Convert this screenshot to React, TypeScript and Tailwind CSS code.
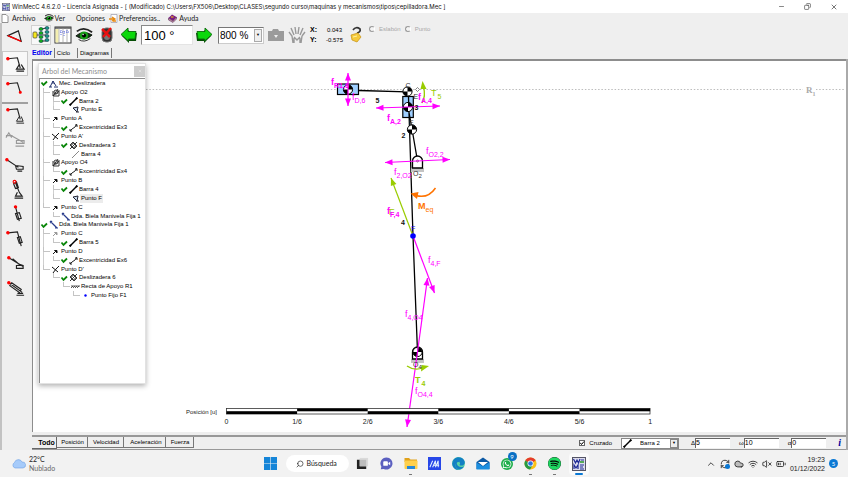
import { ReactNode } from "react";
import { Minus, Copy, X, Search, ChevronUp, Cloud, Wifi, VolumeX, RefreshCw, BatteryMedium } from "lucide-react";
import { FaEdge, FaSpotify, FaWhatsapp } from "react-icons/fa";

type Row = {
  guides?: string;
  check?: boolean;
  pad?: boolean;
  icon: string;
  text: string;
  selected?: boolean;
};

const rows: Row[] = [
  { check: true, icon: "mech", text: "Mec. Deslizadera" },
  { guides: "T", icon: "apoyo", text: "Apoyo O2" },
  { guides: "vT", check: true, icon: "barra", text: "Barra 2" },
  { guides: "vL", pad: true, icon: "punto", text: "Punto E" },
  { guides: "T", icon: "pin", text: "Punto A" },
  { guides: "vL", check: true, icon: "exc", text: "Excentricidad Ex3" },
  { guides: "T", icon: "cross", text: "Punto A'" },
  { guides: "vT", check: true, icon: "desl", text: "Deslizadera 3" },
  { guides: "vL", pad: true, icon: "thin", text: "Barra 4" },
  { guides: "T", icon: "apoyo", text: "Apoyo O4" },
  { guides: "vL", check: true, icon: "exc", text: "Excentricidad Ex4" },
  { guides: "T", icon: "pin", text: "Punto B" },
  { guides: "vT", check: true, icon: "barra", text: "Barra 4" },
  { guides: "vL", pad: true, icon: "punto", text: "Punto F", selected: true },
  { guides: "L", icon: "pin", text: "Punto C" },
  { guides: " L", icon: "dda", text: "Dda. Biela Manivela Fija 1" },
  { check: true, icon: "dda", text: "Dda. Biela Manivela Fija 1" },
  { guides: "T", icon: "pinGray", text: "Punto C" },
  { guides: "vL", check: true, icon: "barra", text: "Barra 5" },
  { guides: "T", icon: "pin", text: "Punto D" },
  { guides: "vL", check: true, icon: "exc", text: "Excentricidad Ex6" },
  { guides: "L", icon: "cross", text: "Punto D'" },
  { guides: " L", check: true, icon: "desl", text: "Deslizadera 6" },
  { guides: "  L", icon: "recta", text: "Recta de Apoyo R1" },
  { guides: "   L", icon: "dot", text: "Punto Fijo F1" },
];

const treeIcons: Record<string, ReactNode> = {
  mech: <path d="M1 8L4 2L7 7M4 2V5M5 8H9M0 8H3" stroke="#22306b" fill="none" />,
  apoyo: (
    <g stroke="#222" fill="none" strokeWidth="0.9">
      <circle cx="5" cy="4" r="2" />
      <path d="M2 8L7 1M2 3V8H8V2M2 8L8 3" />
    </g>
  ),
  barra: (
    <g stroke="#000" fill="#000">
      <path d="M1 8L8 1" strokeWidth="1.4" />
      <circle cx="1.3" cy="7.7" r="0.7" />
      <circle cx="7.7" cy="1.3" r="0.7" />
    </g>
  ),
  punto: <path d="M2 3L7 2L6 7ZM5 7H8" stroke="#223" fill="#cde" />,
  pin: <path d="M2 7L4 5M3.5 3.5H6V6Z" stroke="#111" fill="#111" />,
  pinGray: <path d="M2 7L4 5M3.5 3.5H6V6Z" stroke="#999" fill="#999" />,
  exc: <path d="M1 8L3 6L6 4L8 1M6 2H8V4M1 6V8H3" stroke="#222" fill="none" />,
  cross: <path d="M1 2L7 7M5 4L2 8M5 4L8 1" stroke="#111" fill="none" />,
  desl: (
    <g stroke="#222" fill="none" strokeWidth="0.9">
      <path d="M1 8L8 1M1 4L5 8L8 5L4 1Z" />
      <circle cx="4.5" cy="4.5" r="2" />
    </g>
  ),
  thin: <path d="M1 8L8 1" stroke="#888" fill="none" />,
  dda: <path d="M1 1L4 4L6 6L8 8M1 3L3 1M6 8H9" stroke="#2a3c8c" fill="none" strokeWidth="1.2" />,
  recta: <path d="M0 4H9M0 6L2 4M2 6L4 4M4 6L6 4M6 6L8 4" stroke="#333" fill="none" strokeWidth="0.8" />,
  dot: <circle cx="4.5" cy="4.5" r="1.2" fill="#0000ff" />,
};

const Guide = ({ kind, last }: { kind: string; last: boolean }) => (
  <span className={last ? "flex w-[7px] flex-col self-stretch" : "flex w-[10px] flex-col self-stretch"}>
    <span className={kind === " " ? "flex-1" : kind === "v" ? "flex-1 border-l border-[#cfcfcf]" : "flex-1 border-b border-l border-[#c4c4c4]"} />
    <span className={kind === "v" || kind === "T" ? "flex-1 border-l border-[#cfcfcf]" : "flex-1"} />
  </span>
);

const TreeRow = ({ row }: { row: Row }) => {
  const guides = (row.guides ?? "").split("");
  return (
    <li className={row.guides ? "flex items-center pl-[3px]" : "flex items-center"}>
      {guides.map((g, i) => (
        <Guide key={i} kind={g} last={i === guides.length - 1} />
      ))}
      {row.check && (
        <svg viewBox="0 0 8 8" className="size-2 shrink-0">
          <path d="M1.5 3.5L3.5 6L7 2.5" stroke="#0a860a" strokeWidth="1.8" fill="none" />
        </svg>
      )}
      <svg viewBox="0 0 9 9" className={row.pad ? "ml-[11px] size-[9px] shrink-0" : "ml-px size-[9px] shrink-0"}>
        {treeIcons[row.icon]}
      </svg>
      <span className={row.selected ? "bg-[#ececec] px-px" : "px-px"}>{row.text}</span>
    </li>
  );
};

const TreePanel = () => (
  <section className="absolute top-[2px] bottom-[48px] left-[5px] flex w-[108px] flex-col border border-[#e2e2e2] bg-white shadow-[0_2px_5px_rgba(0,0,0,0.3)]">
    <header className="flex h-[14px] items-center justify-between bg-white pl-[3px] text-[#8c8c8c]">
      <h2 className="font-['Lato',sans-serif] text-[7px]">Arbol del Mecanismo</h2>
      <button aria-label="Cerrar" className="flex h-[11px] w-[11px] items-center justify-center bg-[#cdcdcd] text-white">
        <X size={4} />
      </button>
    </header>
    <div className="flex-1 border-t border-l border-[#8c8c8c]">
      <ul className="grid h-[221px] auto-rows-fr whitespace-nowrap">
        {rows.map((row, i) => (
          <TreeRow key={i} row={row} />
        ))}
      </ul>
    </div>
  </section>
);

const Mass = ({ x, y }: { x: number; y: number }) => (
  <g transform={`translate(${x} ${y})`}>
    <circle r="4.6" fill="#fff" stroke="#000" />
    <path d="M0 0V-4.6A4.6 4.6 0 0 1 4.6 0ZM0 0V4.6A4.6 4.6 0 0 1 -4.6 0Z" fill="#000" />
  </g>
);

const Arrow = ({ from, to, color }: { from: number[]; to: number[]; color: string }) => {
  const angle = (Math.atan2(to[1] - from[1], to[0] - from[0]) * 180) / Math.PI;
  return (
    <g fill={color} stroke={color}>
      <path d={`M${from[0]} ${from[1]}L${to[0]} ${to[1]}`} strokeWidth="1.2" />
      <path d="M0 0L-7.5 -3L-7.5 3Z" stroke="none" transform={`translate(${to[0]} ${to[1]}) rotate(${angle})`} />
    </g>
  );
};

const Force = ({ x, y, sub, bold }: { x: number; y: number; sub: string; bold?: boolean }) => (
  <text x={x} y={y} fontSize="9" fontWeight={bold ? 700 : 400} fill="#ff00ff">
    f
    <tspan dy="3" fontSize="7">{sub}</tspan>
  </text>
);

const Ground = ({ y }: { y: number }) => (
  <g>
    <rect x="411" y={y + 12} width="13" height="4" fill="#c4c4c4" />
    <path d={`M412.5 ${y + 12}V${y + 5}A5 5 0 0 1 422.5 ${y + 5}V${y + 12}Z`} fill="#fff" stroke="#000" strokeWidth="1.3" />
  </g>
);

const Mechanism = () => (
  <svg viewBox="33 61 812 371" preserveAspectRatio="xMinYMin meet" className="size-full font-['Liberation_Sans',sans-serif]">
    <path d="M146 89.5H845" stroke="#bdbdbd" strokeDasharray="1.5 1.8" />
    <rect x="803" y="84" width="13" height="11" fill="#fff" />
    <text x="806" y="93" fontSize="9" fontWeight="700" fill="#aaa" className="font-['Liberation_Serif',serif]">
      R<tspan dy="3" fontSize="6">1</tspan>
    </text>

    <rect x="337.5" y="84" width="21" height="10.5" fill="#9fcfff" stroke="#000" strokeWidth="1.2" />
    <rect x="402.8" y="96.5" width="10.5" height="21" fill="#9fcfff" stroke="#000" strokeWidth="1.2" />
    <path d="M359 90.5L407 91.8M408 107L412 129L417.5 161M408.5 97L413 236L417.5 352" stroke="#000" strokeWidth="1.3" fill="none" />

    <Ground y={156} />
    <Ground y={347} />
    <circle cx="417.5" cy="161" r="1" fill="#fff" stroke="#000" strokeWidth="0.5" />
    <Mass x={348} y={89.5} />
    <Mass x={407.5} y={91.5} />
    <Mass x={408} y={107} />
    <Mass x={412} y={129.5} />
    <Mass x={417.5} y={352} />
    <path d="M417.5 87.5L419.5 89.5L417.5 91.5L415.5 89.5Z" fill="#fff" stroke="#555" strokeWidth="0.7" />

    <Arrow from={[348, 89]} to={[348, 73]} color="#ff00ff" />
    <Arrow from={[348, 89]} to={[348, 106]} color="#ff00ff" />
    <Arrow from={[408, 107]} to={[376, 108]} color="#ff00ff" />
    <Arrow from={[408, 107]} to={[440, 106]} color="#ff00ff" />
    <Arrow from={[417, 161]} to={[385, 162.5]} color="#ff00ff" />
    <Arrow from={[417, 161]} to={[450, 159.5]} color="#ff00ff" />
    <Arrow from={[413, 236]} to={[391, 178]} color="#99cc00" />
    <Arrow from={[413, 236]} to={[434.5, 293]} color="#ff00ff" />
    <Arrow from={[417.5, 352]} to={[427.5, 278]} color="#ff00ff" />
    <Arrow from={[417.5, 352]} to={[407, 427]} color="#ff00ff" />
    <circle cx="413" cy="236" r="2.8" fill="#0000ff" />

    <path d="M422 103Q426 96 423.5 87" stroke="#99cc00" strokeWidth="1.3" fill="none" />
    <path d="M422.5 81L426.5 89L420.5 89Z" fill="#99cc00" />
    <path d="M407 366Q414 371 423 368" stroke="#99cc00" strokeWidth="1.3" fill="none" />
    <path d="M429 366L421 371.5L421.5 365Z" fill="#99cc00" />
    <path d="M435.5 188Q428 199 416 195.5" stroke="#ff7300" strokeWidth="1.5" fill="none" />
    <path d="M410.5 193.5L418.5 192L417 199Z" fill="#ff7300" />

    <text x="431" y="96" fontSize="9" fill="#99cc00">T<tspan dx="1" dy="3" fontSize="7">5</tspan></text>
    <text x="415" y="383" fontSize="9" fontWeight="700" fill="#99cc00">T<tspan dx="1" dy="3" fontSize="7">4</tspan></text>
    <text x="418" y="209" fontSize="9" fontWeight="700" fill="#ff7300">M<tspan dy="3" fontSize="7" fontWeight="400">eq</tspan></text>

    <Force x={331} y={85} sub="R1,6" bold />
    <Force x={352} y={100} sub="D,6" />
    <Force x={418} y={100} sub="A,4" bold />
    <Force x={387} y={121} sub="A,2" bold />
    <Force x={426} y={154} sub="O2,2" />
    <Force x={394} y={175} sub="2,O2" />
    <text x="389" y="215" fontSize="9" fill="#99cc00">F</text>
    <Force x={387} y={214} sub="F,4" bold />
    <Force x={428} y={263} sub="4,F" />
    <Force x={405} y={317} sub="4,O4" />
    <Force x={415} y={394} sub="O4,4" />

    <g fontSize="7" fontWeight="700" fill="#111">
      <text x="375.5" y="103">5</text>
      <text x="414.5" y="110">3</text>
      <text x="401.5" y="138">2</text>
      <text x="401" y="225">4</text>
    </g>
    <g fontSize="7" fill="#333">
      <text x="405.5" y="88">C</text>
      <text x="413.5" y="99">E</text>
      <text x="409" y="125">E</text>
      <text x="413" y="176">O<tspan dy="2" fontSize="6">2</tspan></text>
      <text x="413" y="367">O<tspan dy="2" fontSize="6">4</tspan></text>
      <text x="411" y="231" fill="#0000ff">F</text>
    </g>

    <rect x="226.5" y="408.5" width="423.5" height="5.5" fill="#fff" stroke="#333" strokeWidth="0.8" />
    {[0, 1, 2, 3, 4, 5].map((i) => (
      <rect key={i} x={226.5 + i * 70.6} y={i % 2 ? 408.5 : 411.2} width="70.6" height="2.8" fill="#000" />
    ))}
    <g fill="#222">
      <text x="186" y="414" fontSize="6">Posición [u]</text>
      {["0", "1/6", "2/6", "3/6", "4/6", "5/6", "1"].map((label, i) => (
        <text key={label} x={226.5 + i * 70.6} y="424" fontSize="7" textAnchor="middle">{label}</text>
      ))}
    </g>
  </svg>
);

const Eye = ({ className }: { className: string }) => (
  <svg viewBox="0 0 20 18" className={className}>
    <path d="M2 5Q10 -1 19 6" stroke="#222" strokeWidth="2" fill="none" />
    <path d="M1 10Q9 3 19 9Q11 17 1 10Z" fill="#123c12" stroke="#111" />
    <circle cx="10" cy="9.5" r="4.5" fill="#18a018" />
    <circle cx="10" cy="9.5" r="2.3" fill="#000" />
    <circle cx="9" cy="8.5" r="0.8" fill="#fff" />
    <path d="M4 14Q10 18 17 13" stroke="#222" strokeWidth="1" fill="none" />
  </svg>
);

const GreenArrow = ({ flip }: { flip?: boolean }) => (
  <svg viewBox="0 0 18 16" className={flip ? "h-[16px] w-[18px] -scale-x-100" : "h-[16px] w-[18px]"}>
    <path d="M2 9L9 3V6H17L16 14H9V16Z" fill="#064d06" />
    <path d="M1 7.5L8 1V4.5H16L15 12H8.5V14Z" fill="#0bd80b" stroke="#0a6a0a" strokeWidth="0.9" />
  </svg>
);

const sideTools = [
  { name: "Triángulo", art: <><path d="M3 8L14 3L17 14Z" /><path d="M3 8L17 14" stroke="#f00" strokeWidth="1.5" /></> },
  { name: "Manivela", art: <><path d="M3 6L13 5L16 16" /><path d="M15 12L12 17H20L17 12M12 19H20" strokeWidth="1.3" /><circle cx="3" cy="6" r="1.2" fill="#f00" stroke="#f00" /></> },
  { name: "Díada", art: <><path d="M3 6L13 5L16 15" /><circle cx="3" cy="6" r="1.2" fill="#f00" stroke="#f00" /><circle cx="16" cy="15" r="1" fill="#f00" stroke="#f00" /></> },
  { name: "Biela", art: <><path d="M3 5L13 4L16 15" /><path d="M15 12L12 17H19L17 12M12 19H20" strokeWidth="1" /><circle cx="3" cy="5" r="1.2" fill="#f00" stroke="#f00" /></> },
  { name: "Corredera", art: <g stroke="#999"><path d="M1 7H8M1 9L4 4L7 9M5 6L19 14M12 12H20V15H12ZM11 18H20" /></g> },
  { name: "Biela corredera", art: <><path d="M2 6L14 14M11 12L19 13V16H12ZM13 18H18" /><circle cx="2" cy="6" r="1.2" fill="#f00" stroke="#f00" /></> },
  { name: "Pistón", art: <><path d="M11 4L15 14M9 5L11 10L14 9L12 3ZM13 14L11 18H18L15 14M10 20H19" /><circle cx="10" cy="3" r="1.5" stroke="#f00" /></> },
  { name: "Deslizadera", art: <><path d="M11 3L15 18M11 10L15 9L17 15L13 16Z" /><circle cx="11" cy="3" r="1.2" fill="#f00" stroke="#f00" /></> },
  { name: "Díada deslizadera", art: <><path d="M3 4L13 3L17 18M13 9L16 8L18 14L15 15Z" /><circle cx="3" cy="4" r="1.2" fill="#f00" stroke="#f00" /></> },
  { name: "Guía", art: <><path d="M4 4L19 13M8 5L15 11M13 10L19 12M12 12H19V15H12Z" /><circle cx="4" cy="4" r="1.2" fill="#f00" stroke="#f00" /></> },
  { name: "Cilindro", art: <><path d="M4 4L18 14M7 4L17 11L15 14L5 7ZM13 15H19M12 17H20" /><circle cx="4" cy="4" r="1.2" fill="#f00" stroke="#f00" /></> },
];

const SideBar = () => (
  <aside className="flex w-[28px] shrink-0 flex-col border-l-2 border-[#c2c2c2] bg-[#efefef] pt-[3px]">
    {sideTools.map((tool, i) => (
      <button
        key={tool.name}
        aria-label={tool.name}
        className={
          i === 1
            ? "flex h-[25px] items-center justify-center border border-[#c8c8c8] bg-[#f8f8f8]"
            : i === 3
              ? "mt-px flex h-[25px] items-center justify-center border-t-2 border-[#a0a0a0]"
              : "flex h-[25px] items-center justify-center"
        }
      >
        <svg viewBox="0 0 22 22" className="size-[21px]" fill="none" stroke="#222" strokeWidth="1.2">
          {tool.art}
        </svg>
      </button>
    ))}
  </aside>
);

const ToolBar = () => (
  <div className="flex h-[22px] items-center pl-[2px]">
    <button aria-label="Árbol" className="flex h-[20px] w-[20px] items-center justify-center border border-[#d0d0d0] bg-[#f8f8f8]">
      <svg viewBox="0 0 18 18" className="size-[18px]">
        <rect x="1" y="6" width="4" height="6" rx="1" fill="#f5e61e" stroke="#444" strokeWidth="0.7" />
        <path d="M5 9H8M10 3L14 2M10 9H14M10 15L14 15" stroke="#333" />
        {[2, 6, 10, 14].map((y) => (
          <g key={y} stroke="#034" strokeWidth="0.6">
            <ellipse cx="9" cy={y + 1} rx="2" ry="1.5" fill="#14b514" />
            <ellipse cx="15" cy={y} rx="2" ry="1.5" fill="#1b9a88" />
          </g>
        ))}
      </svg>
    </button>
    <button aria-label="Tabla" className="ml-[3px]">
      <svg viewBox="0 0 18 18" className="size-[18px]">
        <rect x="1" y="1" width="16" height="16" fill="#fff" stroke="#333" />
        <path d="M1 2H17" stroke="#555" strokeWidth="1.5" />
        <rect x="1.5" y="3" width="3" height="13.5" fill="#f4efb0" />
        <path d="M5 2V17M9 2V17M13 2V17" stroke="#999" strokeWidth="0.7" />
        <path d="M7 4V9M10 5V10M13 4V8M6 6H15" stroke="#6672e0" strokeDasharray="1 1" />
      </svg>
    </button>
    <button aria-label="Ver" className="ml-[3px]"><Eye className="size-[18px]" /></button>
    <button aria-label="Detener" className="ml-[6px]">
      <svg viewBox="0 0 16 18" className="h-[18px] w-[16px]">
        <rect x="3" y="2" width="10" height="14" rx="4" fill="#333" stroke="#777" />
        <circle cx="8" cy="11" r="3" fill="#777" />
        <path d="M3 3L11 11M12 2L4 11" stroke="#e81010" strokeWidth="2.5" />
      </svg>
    </button>
    <button aria-label="Retroceder" className="ml-[5px]"><GreenArrow /></button>
    <input aria-label="Ángulo" defaultValue="100 °" className="ml-[3px] h-[20px] w-[52px] border border-[#e4e4e4] border-t-[#888] border-l-[#888] bg-white pl-[2px] font-['Liberation_Sans',sans-serif] text-[13px]" />
    <button aria-label="Avanzar" className="ml-[2px]"><GreenArrow flip /></button>
    <span className="relative ml-[5px] block">
      <select aria-label="Zoom" className="block h-[17px] w-[46px] appearance-none border border-[#ccc] border-t-[#777] border-l-[#777] bg-white pl-px font-['Liberation_Sans',sans-serif] text-[10px]">
        <option>800 %</option>
      </select>
      <span className="pointer-events-none absolute top-[2px] right-[2px] flex h-[13px] w-[8px] items-center justify-center border border-[#aaa] bg-[#efefef] text-[4px]">▼</span>
    </span>
    <button aria-label="Captura" className="ml-[3px]">
      <svg viewBox="0 0 18 16" className="h-[16px] w-[18px]">
        <path d="M1 4H5L6 2H11L12 4H17V14H1Z" fill="#9b9b9b" />
        <path d="M7 8H11L9 11Z" fill="#eee" />
      </svg>
    </button>
    <button aria-label="Mano" className="ml-[3px]">
      <svg viewBox="0 0 18 18" className="size-[18px]" stroke="#999" fill="none" strokeWidth="1.4">
        <path d="M5 17L4 10L1 6M6 9L3 2M8 8L7 1M10 8L11 1M12 9L15 2M14 10L17 6M13 17L14 10M6 11L9 14L12 11M6 17V12M12 17V12" />
      </svg>
    </button>
    <dl className="ml-[4px] grid w-[32px] grid-cols-2 font-['Liberation_Sans',sans-serif] text-[6px] leading-[10px]">
      <dt className="text-[7px] font-bold">X:</dt>
      <dd className="text-right">0.043</dd>
      <dt className="text-[7px] font-bold">Y:</dt>
      <dd className="text-right">-0.575</dd>
    </dl>
    <button aria-label="Ayuda contextual" className="ml-[7px]">
      <svg viewBox="0 0 14 18" className="h-[18px] w-[14px]">
        <path d="M4 4Q7 0 11 3Q12 6 8 7" stroke="#333" strokeWidth="1.7" fill="none" />
        <path d="M2 9L9 7L12 11L8 16L3 14Z" fill="#f5c93b" stroke="#c58f10" strokeWidth="0.7" />
        <path d="M4 11L8 10" stroke="#fff3a0" />
      </svg>
    </button>
    <fieldset disabled className="ml-[6px] flex gap-1 self-start pt-px font-['Liberation_Sans',sans-serif] text-[6px] leading-[8px] text-[#a8a8a8]">
      <label className="flex items-center gap-1">
        <input type="radio" name="target" className="size-[6px] appearance-none rounded-full border border-[#999] border-r-white bg-[#f4f4f4]" />
        Eslabón
      </label>
      <label className="flex items-center gap-1">
        <input type="radio" name="target" className="size-[6px] appearance-none rounded-full border border-[#999] border-r-white bg-[#f4f4f4]" />
        Punto
      </label>
    </fieldset>
  </div>
);

const StatusBar = () => (
  <div className="flex h-[15px] items-start border-t-2 border-b border-[#999] font-['Liberation_Sans',sans-serif] text-[6px]">
    <nav className="flex h-[12px] items-stretch">
      <button className="w-[25px] border-r border-b border-[#666] pl-[5px] text-[7px] leading-[11px] font-bold">Todo</button>
      <button className="mb-px w-[31px] border-r border-b border-[#777] pl-px leading-[10px]">Posición</button>
      <button className="mb-px w-[36px] border-r border-b border-[#777] pl-px leading-[10px]">Velocidad</button>
      <button className="mb-px w-[42px] border-r border-b border-[#777] pl-[3px] leading-[10px]">Aceleración</button>
      <button className="mb-px w-[28px] border-r border-b border-[#777] pl-px leading-[10px]">Fuerza</button>
    </nav>
    <div className="ml-auto flex h-[12px] items-center pr-[5px]">
      <label className="flex items-center gap-1">
        <span className="relative flex">
          <input type="checkbox" defaultChecked className="peer size-[6px] appearance-none border border-[#666] bg-white" />
          <svg viewBox="0 0 6 6" className="pointer-events-none absolute inset-0 hidden size-[6px] peer-checked:block">
            <path d="M1.3 2.8L2.5 4.5L5 1.5" stroke="#000" fill="none" />
          </svg>
        </span>
        Cruzado
      </label>
      <span className="relative ml-[9px] block">
        <select aria-label="Barra" className="block h-[11px] w-[58px] appearance-none border border-[#888] bg-white pl-[18px] text-[6px]">
          <option>Barra 2</option>
        </select>
        <svg viewBox="0 0 9 9" className="pointer-events-none absolute top-px left-[2px] size-[9px]">{treeIcons.barra}</svg>
        <span className="pointer-events-none absolute top-px right-px flex h-[9px] w-[8px] items-center justify-center border border-[#888] bg-[#efefef] text-[4px]">▼</span>
      </span>
      <label className="ml-[12px] flex items-center">
        Δ
        <input defaultValue="5" className="h-[10px] w-[35px] border-t border-l border-[#666] bg-white text-[7px]" />
      </label>
      <label className="ml-[9px] flex items-center">
        ω
        <input defaultValue="10" className="h-[10px] w-[35px] border-t border-l border-[#666] bg-white text-[7px]" />
      </label>
      <label className="ml-[9px] flex items-center">
        α
        <input defaultValue="0" className="h-[10px] w-[35px] border-t border-l border-[#666] bg-white text-[7px]" />
      </label>
      <button aria-label="Información" className="ml-[12px] font-['Liberation_Serif',serif] text-[10px] leading-[10px] font-bold text-[#00009c] italic">i</button>
    </div>
  </div>
);

const AppLogo = ({ className }: { className: string }) => (
  <svg viewBox="0 0 14 14" className={className}>
    <rect x="0.5" y="0.5" width="13" height="13" fill="#dcdcec" stroke="#556" />
    <path d="M1.5 2L3.5 6L5 3L6.5 6L8 2M9 3H12M2 12V8L4 11L6 8V12M8 8H12M8 10H11M8 12H12" stroke="#1e2a96" strokeWidth="1.2" fill="none" />
    <path d="M8 5H12" stroke="#1a951a" strokeWidth="1.4" />
  </svg>
);

const TaskItem = ({ name, running, active, children }: { name: string; running?: boolean; active?: boolean; children: ReactNode }) => (
  <button
    aria-label={name}
    className={
      active
        ? "relative flex h-[22px] w-[20px] items-center justify-center rounded-sm bg-[#fafafa]"
        : "relative flex h-[22px] w-[20px] items-center justify-center"
    }
  >
    {children}
    {running && <span className="absolute bottom-0 h-px w-[3px] bg-[#777]" />}
    {active && <span className="absolute bottom-0 h-[2px] w-[8px] rounded-full bg-[#0a78d4]" />}
  </button>
);

const TaskBar = () => (
  <footer className="flex h-[27px] shrink-0 items-center bg-[#f2f2f2] text-[7px] text-[#222]">
    <div className="flex flex-1 items-center gap-[3px] pl-[11px]">
      <svg viewBox="0 0 15 11" className="h-[11px] w-[15px]">
        <path d="M4 10A3 3 0 0 1 3.5 4.5A4 4 0 0 1 11 4A3 3 0 0 1 12 10Z" fill="#a6cbfa" stroke="#6b9fe6" strokeWidth="0.6" />
      </svg>
      <div className="leading-[9px]">
        <p>22°C</p>
        <p className="text-[#666]">Nublado</p>
      </div>
    </div>
    <nav className="flex items-center gap-[4px] pl-[3px]">
      <button aria-label="Inicio" className="mr-[5px]">
        <svg viewBox="0 0 13 13" className="size-[13px]" fill="#1585d8">
          <path d="M0 0H6.2V6.2H0ZM6.8 0H13V6.2H6.8ZM0 6.8H6.2V13H0ZM6.8 6.8H13V13H6.8Z" />
        </svg>
      </button>
      <button className="flex h-[17px] w-[63px] items-center gap-[3px] rounded-full bg-white pl-[10px]">
        <Search size={8} className="-scale-x-100" />
        Búsqueda
      </button>
      <TaskItem name="Vista de tareas">
        <svg viewBox="0 0 14 14" className="size-[13px]">
          <rect x="4" y="1" width="9" height="9" fill="#dadada" />
          <path d="M1 3H4V10H11V13H1Z" fill="#222" />
          <rect x="4" y="3" width="7" height="7" fill="#bdbdbd" />
        </svg>
      </TaskItem>
      <TaskItem name="Chat">
        <svg viewBox="0 0 14 14" className="size-[13px]">
          <path d="M7 0.5A6.5 6.5 0 1 1 4 12.8L0.8 13.3L1.5 10.5A6.5 6.5 0 0 1 7 0.5Z" fill="#5b5fc0" />
          <rect x="3.5" y="4.5" width="5" height="5" rx="1" fill="#fff" />
          <path d="M9 6.5L11 5V9L9 7.5Z" fill="#fff" />
        </svg>
      </TaskItem>
      <TaskItem name="Explorador" running>
        <svg viewBox="0 0 14 13" className="h-[13px] w-[14px]">
          <path d="M0.5 1H5L6.5 2.5H13V5H0.5Z" fill="#e0a11b" />
          <rect x="0.5" y="3.5" width="13" height="8.5" rx="0.8" fill="#ffd04c" />
          <path d="M3 12V9H11V12Z" fill="#2687d8" />
        </svg>
      </TaskItem>
      <TaskItem name="MyAsus">
        <svg viewBox="0 0 14 14" className="size-[13px]">
          <rect width="14" height="14" fill="#2747e8" />
          <path d="M2 11L5 4M5 11L8 4L8 8M8 11L11 4V11M6 9H12" stroke="#e8f6ff" fill="none" strokeWidth="1.1" />
        </svg>
      </TaskItem>
      <TaskItem name="Edge">
        <span className="flex rounded-full bg-[#5fd3a4]"><FaEdge size={13} color="#1280c4" /></span>
      </TaskItem>
      <TaskItem name="Correo">
        <svg viewBox="0 0 14 13" className="h-[13px] w-[14px]">
          <path d="M0.5 5L7 0.5L13.5 5V12H0.5Z" fill="#0c59a4" />
          <path d="M2 5H12L7 9Z" fill="#fff" />
          <path d="M0.5 5.5L7 9.5L13.5 5.5V12.5H0.5Z" fill="#1c8fe0" />
        </svg>
      </TaskItem>
      <TaskItem name="WhatsApp">
        <span className="flex size-[12px] items-center justify-center rounded-full bg-[#1fae4b]"><FaWhatsapp size={10} color="#fff" /></span>
        <span className="absolute -top-px right-0 flex size-[9px] items-center justify-center rounded-full bg-[#0a70c4] text-[6px] text-white">9</span>
      </TaskItem>
      <TaskItem name="Chrome" running>
        <svg viewBox="0 0 14 14" className="size-[13px]">
          <circle cx="7" cy="7" r="6.5" fill="#fbc116" />
          <path d="M7 7L1.4 3.7A6.5 6.5 0 0 1 12.6 3.7Z" fill="#e33b2e" />
          <path d="M7 7L1.4 3.7A6.5 6.5 0 0 0 6.5 13.5L9.8 8Z" fill="#269a45" />
          <circle cx="7" cy="7" r="3.2" fill="#fff" />
          <circle cx="7" cy="7" r="2.5" fill="#2d74e0" />
        </svg>
      </TaskItem>
      <TaskItem name="Spotify" running>
        <span className="flex rounded-full bg-black"><FaSpotify size={13} color="#1ed760" /></span>
      </TaskItem>
      <TaskItem name="WinMecC" active><AppLogo className="size-[14px]" /></TaskItem>
    </nav>
    <div className="flex flex-1 items-center justify-end gap-[4px] pr-[10px]">
      <ChevronUp size={10} />
      <span className="relative flex">
        <RefreshCw size={10} />
        <span className="absolute right-0 bottom-0 size-[5px] rounded-full bg-[#0a78d4]" />
      </span>
      <Cloud size={10} fill="#bbb" />
      <Wifi size={10} />
      <VolumeX size={10} />
      <BatteryMedium size={10} />
      <div className="text-right font-['Liberation_Sans',sans-serif] leading-[9px]">
        <p>19:23</p>
        <p>01/12/2022</p>
      </div>
      <span className="flex size-[9px] items-center justify-center rounded-full bg-[#0a78d4] text-[6px] text-white">5</span>
    </div>
  </footer>
);

const TitleBar = () => (
  <header className="flex h-[13px] shrink-0 items-center bg-white pl-[2px]">
    <AppLogo className="size-[8px]" />
    <h1 className="ml-[2px] font-['Inter',sans-serif] text-[6px] whitespace-nowrap text-[#111]">
      WinMecC 4.6.2.0 - Licencia Asignada - [ (Modificado) C:\Users\FX506\Desktop\CLASES\segundo curso\maquinas y mecanismos\tipos\cepilladora.Mec ]
    </h1>
    <div className="ml-auto flex gap-[19px] pr-[10px] text-[#333]">
      <button aria-label="Minimizar"><Minus size={7} /></button>
      <button aria-label="Restaurar"><Copy size={7} className="-scale-x-100" /></button>
      <button aria-label="Cerrar"><X size={8} /></button>
    </div>
  </header>
);

const MenuBar = () => (
  <nav className="flex h-[10px] shrink-0 items-center pl-px text-[7px] text-[#222]">
    <button className="flex items-center gap-[3px]">
      <svg viewBox="0 0 8 9" className="h-[9px] w-[8px]"><path d="M1 0.5H5L7 2.5V8.5H1Z" fill="#fff" stroke="#777" strokeWidth="0.8" /></svg>
      Archivo
    </button>
    <button className="ml-[8px] flex items-center gap-px"><Eye className="size-[10px]" />Ver</button>
    <button className="ml-[11px]">Opciones</button>
    <button className="ml-[4px] flex items-center gap-px">
      <svg viewBox="0 0 9 9" className="size-[9px]"><path d="M2 0.5H8V8.5H2Z" fill="#fff" stroke="#99a" strokeWidth="0.7" /><path d="M0 5H5M3 3L6 5L3 7M4 7H7" stroke="#e88b12" strokeWidth="1.3" fill="none" /></svg>
      Preferencias..
    </button>
    <button className="ml-[8px] flex items-center gap-[2px]">
      <svg viewBox="0 0 9 9" className="size-[9px]"><path d="M0.5 4L4 0.5L8.5 3L5 7Z" fill="#7a1c82" /><path d="M0.5 4V6L5 8.5L8.5 5V3L5 7Z" fill="#b99" stroke="#52105a" strokeWidth="0.5" /><path d="M3 3H5.5" stroke="#fc0" /></svg>
      Ayuda
    </button>
  </nav>
);

export default function App() {
  return (
    <div className="flex h-screen flex-col overflow-hidden bg-[#efefef] font-['Lato',sans-serif] text-black">
      <TitleBar />
      <MenuBar />
      <main className="flex min-h-0 flex-1">
        <SideBar />
        <div className="flex min-w-0 flex-1 flex-col pt-px pl-px">
          <ToolBar />
          <nav className="flex h-[13px] items-center pl-[2px] font-['Liberation_Sans',sans-serif] text-[6px] leading-[10px]">
            <button className="w-[24px] border-r border-[#777] pr-px text-[7px] font-bold text-[#0000ee]">Editor</button>
            <button className="w-[23px] border-r border-[#777] pr-[5px]">Ciclo</button>
            <button className="w-[34px] border-r border-[#777]">Diagramas</button>
          </nav>
          <div className="flex min-h-0 flex-1 flex-col border-r-2 border-[#aaa] pl-[3px]">
            <div className="relative mb-[3px] min-h-0 flex-1 border-t-2 border-l border-[#8d8d8d] bg-white font-['Liberation_Sans',sans-serif] text-[6px]">
              <Mechanism />
              <TreePanel />
            </div>
            <StatusBar />
          </div>
        </div>
      </main>
      <TaskBar />
    </div>
  );
}
